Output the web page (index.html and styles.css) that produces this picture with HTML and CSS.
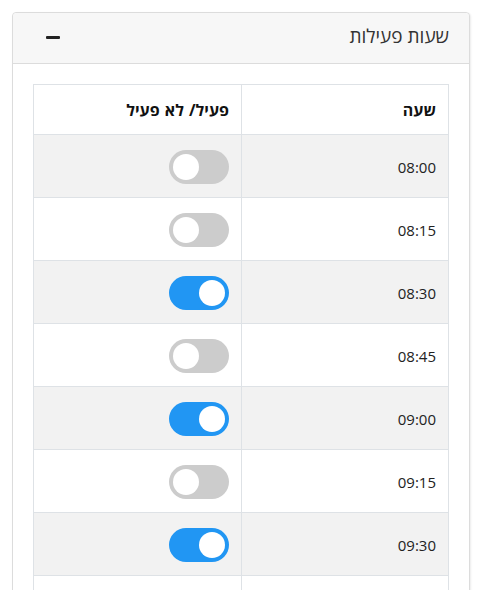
FILE: index.html
```html
<!DOCTYPE html>
<html lang="he" dir="rtl">
<head>
<meta charset="utf-8">
<link rel="stylesheet" href="styles.css">
</head>
<body>
<div class="card">
  <div class="card-header">
    <span class="title">שעות פעילות</span>
    <span class="minus"></span>
  </div>
  <div class="card-body">
    <table class="table">
      <thead>
        <tr><th class="c-time">שעה</th><th class="c-act">פעיל/ לא פעיל</th></tr>
      </thead>
      <tbody>
        <tr class="odd"><td class="c-time">08:00</td><td class="c-act"><span class="switch"><span class="knob"></span></span></td></tr>
        <tr><td class="c-time">08:15</td><td class="c-act"><span class="switch"><span class="knob"></span></span></td></tr>
        <tr class="odd"><td class="c-time">08:30</td><td class="c-act"><span class="switch on"><span class="knob"></span></span></td></tr>
        <tr><td class="c-time">08:45</td><td class="c-act"><span class="switch"><span class="knob"></span></span></td></tr>
        <tr class="odd"><td class="c-time">09:00</td><td class="c-act"><span class="switch on"><span class="knob"></span></span></td></tr>
        <tr><td class="c-time">09:15</td><td class="c-act"><span class="switch"><span class="knob"></span></span></td></tr>
        <tr class="odd"><td class="c-time">09:30</td><td class="c-act"><span class="switch on"><span class="knob"></span></span></td></tr>
        <tr><td class="c-time">09:45</td><td class="c-act"><span class="switch"><span class="knob"></span></span></td></tr>
      </tbody>
    </table>
  </div>
</div>
</body>
</html>
```
FILE: styles.css
```css
html, body {
  margin: 0;
  padding: 0;
  background: #fff;
  font-family: "Open Sans", "DejaVu Sans", sans-serif;
  color: #212529;
}
body {
  padding: 12px 11px 0 12px;
  height: 590px;
  overflow: hidden;
  box-sizing: border-box;
}
.card {
  border: 1px solid #dcdcdc;
  border-radius: 4px;
  box-shadow: 1px 1px 2px rgba(0,0,0,0.08);
  background: #fff;
}
.card-header {
  background: #f7f7f7;
  border-bottom: 1px solid #dcdcdc;
  height: 50px;
  display: flex;
  align-items: center;
  justify-content: space-between;
  padding: 0 20px 0 33px;
  border-radius: 4px 4px 0 0;
}
.title {
  font-size: 19px;
  color: #333;
  position: relative;
  top: -2px;
}
.minus {
  width: 14px;
  height: 3px;
  background: #222;
  border-radius: 1px;
  position: relative;
  top: -1px;
}
.card-body {
  padding: 20px 20px 0 20px;
}
.table {
  width: 100%;
  border-collapse: collapse;
  font-size: 15px;
}
.table th, .table td {
  border: 1px solid #dee2e6;
  text-align: right;
  padding: 0 12px;
  vertical-align: middle;
}
.table th {
  height: 49px;
  font-weight: 700;
  font-size: 16px;
  word-spacing: 1px;
  color: #111;
}
.table th.c-time { width: 182px; }
.table td {
  height: 60px;
  color: #222;
}
.table td.c-time { padding-top: 2px; }
tr.odd td { background: #f2f2f2; }
.switch {
  display: block;
  width: 60px;
  height: 34px;
  border-radius: 17px;
  background: #ccc;
  position: relative;
  margin-top: 2px;
}
.switch.on { background: #2196f3; }
.knob {
  position: absolute;
  left: 4px;
  top: 4px;
  width: 26px;
  height: 26px;
  border-radius: 50%;
  background: #fff;
}
.switch.on .knob { left: 30px; }
```
